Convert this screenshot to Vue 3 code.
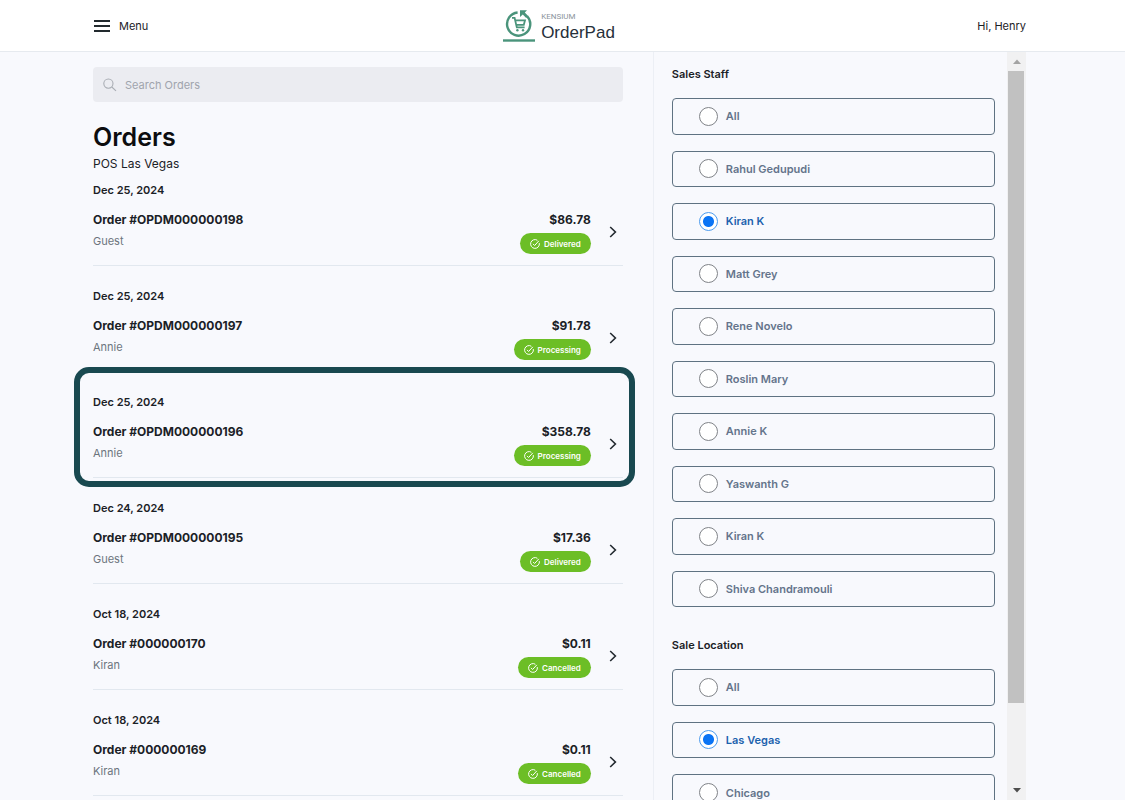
<script setup>
import { ref } from 'vue'

const search = ref('')

const orders = [
  { date: 'Dec 25, 2024', id: 'OPDM000000198', customer: 'Guest', total: '$86.78', status: 'Delivered' },
  { date: 'Dec 25, 2024', id: 'OPDM000000197', customer: 'Annie', total: '$91.78', status: 'Processing' },
  { date: 'Dec 25, 2024', id: 'OPDM000000196', customer: 'Annie', total: '$358.78', status: 'Processing', highlighted: true },
  { date: 'Dec 24, 2024', id: 'OPDM000000195', customer: 'Guest', total: '$17.36', status: 'Delivered' },
  { date: 'Oct 18, 2024', id: '000000170', customer: 'Kiran', total: '$0.11', status: 'Cancelled' },
  { date: 'Oct 18, 2024', id: '000000169', customer: 'Kiran', total: '$0.11', status: 'Cancelled' },
]

const staff = [
  'All', 'Rahul Gedupudi', 'Kiran K', 'Matt Grey', 'Rene Novelo',
  'Roslin Mary', 'Annie K', 'Yaswanth G', 'Kiran K', 'Shiva Chandramouli',
]
const locations = ['All', 'Las Vegas', 'Chicago']

const selectedStaff = ref(2)
const selectedLocation = ref(1)
</script>

<template>
  <div class="app">
    <header class="topbar">
      <button class="menu" type="button">
        <svg width="16" height="12" viewBox="0 0 16 12" aria-hidden="true">
          <path d="M0 1h16M0 6h16M0 11h16" stroke="#222a2e" stroke-width="1.8" />
        </svg>
        <span>Menu</span>
      </button>
      <a class="logo" href="#">
        <svg width="32" height="34" viewBox="0 0 32 34" fill="none" stroke="#4a947b" aria-hidden="true">
          <path d="M24.2 7.2A11.6 11.6 0 1 1 14.6 3.5" stroke-width="2.4" />
          <path d="M17 1.2h7l-2.2 2.4 3.4 3.4-2 2-3.4-3.4L17 8z" fill="#4a947b" stroke="none" />
          <path d="M9 8.8h2.6l2.2 9.6h7.8M12.2 11.4h9.8l-1.2 4.4h-7.6" stroke-width="1.8" />
          <circle cx="14.4" cy="21.2" r="1.2" fill="#4a947b" stroke="none" />
          <circle cx="20" cy="21.2" r="1.2" fill="#4a947b" stroke="none" />
          <path d="M0 31.5h32" stroke-width="2.4" />
        </svg>
        <span class="logo-text">
          <span class="logo-brand">KENSIUM</span>
          <span class="logo-name">OrderPad</span>
        </span>
      </a>
      <span class="greeting">Hi, Henry</span>
    </header>

    <main class="content">
      <section class="orders">
        <div class="search">
          <label for="search" aria-label="Search Orders">
            <svg width="14" height="14" viewBox="0 0 14 14" fill="none" stroke="#a9adb4" stroke-width="1.1" aria-hidden="true">
              <circle cx="5.4" cy="5.6" r="4.6" />
              <path d="M8.8 9l4.2 3.8" />
            </svg>
          </label>
          <input id="search" v-model="search" type="text" placeholder="Search Orders" />
        </div>

        <h1>Orders</h1>
        <p class="store">POS Las Vegas</p>

        <ul class="order-list">
          <li v-for="order in orders" :key="order.id" :class="{ highlighted: order.highlighted }">
            <a class="order" href="#">
              <span class="date">{{ order.date }}</span>
              <span class="body">
                <span class="info">
                  <span class="number">Order #{{ order.id }}</span>
                  <span class="customer">{{ order.customer }}</span>
                </span>
                <span class="summary">
                  <span class="number">{{ order.total }}</span>
                  <span class="badge">
                    <svg width="10" height="10" viewBox="0 0 10 10" fill="none" stroke="#fff" stroke-width="1" aria-hidden="true">
                      <path d="M9.3 4.1A4.4 4.4 0 1 1 7.4 1.3" />
                      <path d="M3 4.9l1.6 1.6 4.2-4.6" />
                    </svg>
                    {{ order.status }}
                  </span>
                </span>
                <svg class="chevron" width="8" height="12" viewBox="0 0 8 12" fill="none" stroke="#232a30" stroke-width="1.6" aria-hidden="true">
                  <path d="M1.2 1l5.2 5-5.2 5" />
                </svg>
              </span>
            </a>
          </li>
        </ul>
      </section>

      <aside class="filters">
        <div class="filter-groups">
          <fieldset>
            <legend>Sales Staff</legend>
            <div class="options staff">
              <label v-for="(name, i) in staff" :key="i" class="option">
                <input v-model="selectedStaff" type="radio" name="staff" :value="i" />
                <span>{{ name }}</span>
              </label>
            </div>
          </fieldset>
          <fieldset>
            <legend>Sale Location</legend>
            <div class="options locations">
              <label v-for="(name, i) in locations" :key="i" class="option">
                <input v-model="selectedLocation" type="radio" name="location" :value="i" />
                <span>{{ name }}</span>
              </label>
            </div>
          </fieldset>
        </div>
        <div class="scrollbar" aria-hidden="true">
          <svg width="10" height="19" viewBox="0 0 10 19"><path d="M1 12l4-4.5L9 12z" fill="#a3a3a3" /></svg>
          <div class="track"><div class="thumb"></div></div>
          <svg width="10" height="19" viewBox="0 0 10 19"><path d="M1 7l4 4.5L9 7z" fill="#4d4d4d" /></svg>
        </div>
      </aside>
    </main>
  </div>
</template>

<style>
body {
  background: #f8f9fd;
}
</style>

<style scoped>
.app {
  height: 100vh;
  display: flex;
  flex-direction: column;
  overflow: hidden;
  background: #f8f9fd;
  color: #1b2126;
  font-family: Inter, "Liberation Sans", sans-serif;
  font-size: 11px;
  line-height: 16px;
}

.app *,
.app {
  box-sizing: border-box;
}

.topbar {
  flex: none;
  display: grid;
  grid-template-columns: 1fr auto 1fr;
  align-items: center;
  height: 52px;
  padding: 0 99px 0 94px;
  background: #fff;
  border-bottom: 1px solid #e6eaef;
}

.menu {
  justify-self: start;
  display: flex;
  align-items: center;
  gap: 9px;
  padding: 0;
  border: 0;
  background: none;
  color: inherit;
  font: inherit;
}

.logo {
  display: flex;
  align-items: center;
  gap: 6px;
  margin-right: 2px;
  color: #26303a;
  text-decoration: none;
}

.logo-text {
  display: flex;
  flex-direction: column;
  padding-top: 2px;
}

.logo-brand {
  color: #8b949c;
  font-family: Roboto, sans-serif;
  font-size: 8px;
  line-height: 12px;
}

.logo-name {
  font-family: "Liberation Sans", sans-serif;
  font-size: 17px;
  line-height: 20px;
}

.greeting {
  justify-self: end;
}

.content {
  flex: 1;
  min-height: 0;
  display: grid;
  grid-template-columns: 3fr 2fr;
  padding: 0 99px 0 93px;
}

.orders {
  min-height: 0;
  padding: 15px 30px 0 0;
}

.search {
  display: flex;
  align-items: center;
  gap: 8px;
  height: 35px;
  padding: 0 10px;
  border-radius: 4px;
  background: #ebecf1;
}

.search label {
  display: flex;
}

.search input {
  flex: 1;
  min-width: 0;
  padding: 0;
  border: 0;
  outline: 0;
  background: none;
  color: inherit;
  font: inherit;
}

.search input::placeholder {
  color: #a0a4ad;
  opacity: 1;
}

h1 {
  margin: 18px 0 0;
  color: #0c0d0f;
  font-size: 25px;
  font-weight: 600;
  line-height: 34px;
}

.store {
  margin: 0;
  font-size: 12px;
  line-height: 20px;
}

.order-list {
  margin: 0;
  padding: 0;
  list-style: none;
}

.order-list li {
  position: relative;
  border-bottom: 1px solid #e2e8ef;
}

.order {
  display: block;
  padding: 22px 0 11px;
  color: inherit;
  text-decoration: none;
}

.order-list li:first-child .order {
  padding-top: 8px;
}

.highlighted::after {
  content: "";
  position: absolute;
  inset: -5px -12px -10px -19px;
  border: 6px solid #194950;
  border-radius: 15px;
  pointer-events: none;
}

.date {
  display: block;
  margin-bottom: 12px;
  font-weight: 600;
}

.body {
  display: flex;
  align-items: center;
}

.info,
.summary {
  display: flex;
  flex-direction: column;
}

.info {
  flex: 1;
  gap: 3px;
  align-self: flex-start;
}

.summary {
  gap: 3px;
  align-items: flex-end;
}

.number {
  font-size: 12px;
  font-weight: 700;
  line-height: 20px;
}

.customer {
  color: #6c757d;
}

.badge {
  display: flex;
  align-items: center;
  gap: 4px;
  height: 21px;
  padding: 0 10px;
  border-radius: 11px;
  background: #6cbe26;
  color: #fff;
  font-size: 8px;
  font-weight: 600;
}

.chevron {
  margin: 0 6px 0 18px;
}

.filters {
  min-height: 0;
  display: flex;
  border-left: 1px solid #eceff5;
}

.filter-groups {
  flex: 1;
  min-width: 0;
  overflow: hidden;
  padding: 14px 12px 0 18px;
}

fieldset {
  min-width: 0;
  margin: 0 0 30px;
  padding: 0;
  border: 0;
}

legend {
  padding: 0 0 16px;
  font-weight: 600;
}

.options {
  display: grid;
  grid-auto-rows: 1fr;
  gap: 16px;
}

.staff {
  min-height: 509px;
}

.locations {
  min-height: 142px;
}

.option {
  display: flex;
  align-items: center;
  gap: 8px;
  padding: 0 26px;
  border: 1px solid #5f7282;
  border-radius: 4px;
  color: #64748b;
  font-weight: 600;
}

.option input {
  appearance: none;
  flex: none;
  width: 19px;
  height: 19px;
  margin: 0;
  border: 1px solid #808388;
  border-radius: 50%;
  background: #fff;
}

.option input:checked {
  border-color: #4c9bee;
  background: radial-gradient(circle, #0a74f5 5px, #fff 6px);
}

.option:has(input:checked) {
  color: #1c62ad;
}

.scrollbar {
  flex: none;
  display: flex;
  flex-direction: column;
  align-items: center;
  width: 19px;
  background: #f1f1f2;
}

.track {
  flex: 1;
  width: 100%;
  padding: 0 2px 0 1px;
}

.thumb {
  height: 89%;
  background: #c1c1c1;
}
</style>
